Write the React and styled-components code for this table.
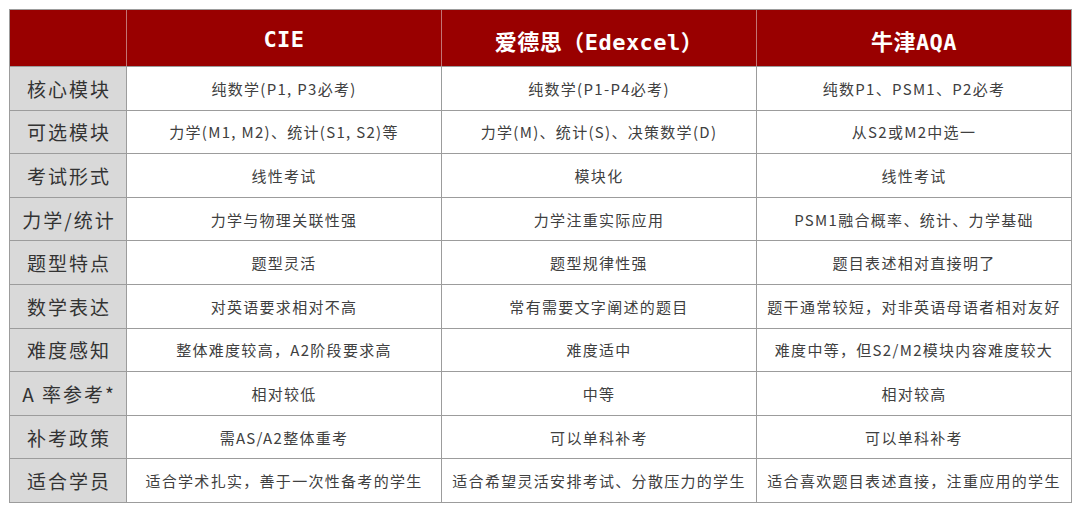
import React from "react";
import styled, { createGlobalStyle } from "styled-components";

const GlobalStyle = createGlobalStyle`
  html, body {
    margin: 0;
    padding: 0;
    background: #fff;
  }
  body {
    font-family: "Noto Sans CJK SC", sans-serif;
  }
`;

const Page = styled.div`
  width: 1080px;
  height: 512px;
  padding: 9px 0 0 9px;
  box-sizing: border-box;
`;

const Grid = styled.div`
  width: 1063px;
  height: 494px;
  box-sizing: border-box;
  padding: 1px;
  display: grid;
  grid-template-columns: 116px 314px 314px 314px;
  grid-template-rows: 56px repeat(10, 1fr);
  gap: 1px;
  background: #9c9c9c;
`;

const HeadCell = styled.div`
  background: #990000;
  color: #fff;
  display: flex;
  align-items: center;
  justify-content: center;
  padding-top: 3px;
  font-family: "DejaVu Sans Mono", "Noto Sans CJK SC", monospace;
  font-weight: bold;
  font-size: 22px;
  letter-spacing: 0.5px;
  box-shadow: -1px 0 0 #c27474;
  &:first-child {
    box-shadow: none;
  }
`;

const LabelCell = styled.div`
  background: #d9d9d9;
  color: #333;
  display: flex;
  align-items: center;
  justify-content: center;
  font-family: "Noto Sans CJK SC", sans-serif;
  font-size: 19px;
  letter-spacing: 2px;
  padding-left: 2px;
`;

const Cell = styled.div`
  background: #fff;
  color: #404040;
  display: flex;
  align-items: center;
  justify-content: center;
  white-space: nowrap;
  font-family: "Noto Sans CJK SC", sans-serif;
  font-size: 15px;
  letter-spacing: 1.3px;
`;

const headers = ["", "CIE", "爱德思（Edexcel）", "牛津AQA"];

const rows = [
  ["核心模块", "纯数学(P1, P3必考)", "纯数学(P1-P4必考)", "纯数P1、PSM1、P2必考"],
  ["可选模块", "力学(M1, M2)、统计(S1, S2)等", "力学(M)、统计(S)、决策数学(D)", "从S2或M2中选一"],
  ["考试形式", "线性考试", "模块化", "线性考试"],
  ["力学/统计", "力学与物理关联性强", "力学注重实际应用", "PSM1融合概率、统计、力学基础"],
  ["题型特点", "题型灵活", "题型规律性强", "题目表述相对直接明了"],
  ["数学表达", "对英语要求相对不高", "常有需要文字阐述的题目", "题干通常较短，对非英语母语者相对友好"],
  ["难度感知", "整体难度较高，A2阶段要求高", "难度适中", "难度中等，但S2/M2模块内容难度较大"],
  ["A 率参考*", "相对较低", "中等", "相对较高"],
  ["补考政策", "需AS/A2整体重考", "可以单科补考", "可以单科补考"],
  ["适合学员", "适合学术扎实，善于一次性备考的学生", "适合希望灵活安排考试、分散压力的学生", "适合喜欢题目表述直接，注重应用的学生"],
];

export default function App() {
  return (
    <Page>
      <GlobalStyle />
      <Grid>
        {headers.map((h, i) => (
          <HeadCell key={"h" + i}>{h}</HeadCell>
        ))}
        {rows.map((row) => (
          <React.Fragment key={row[0]}>
            <LabelCell>{row[0]}</LabelCell>
            {row.slice(1).map((text, i) => (
              <Cell key={i}>{text}</Cell>
            ))}
          </React.Fragment>
        ))}
      </Grid>
    </Page>
  );
}
